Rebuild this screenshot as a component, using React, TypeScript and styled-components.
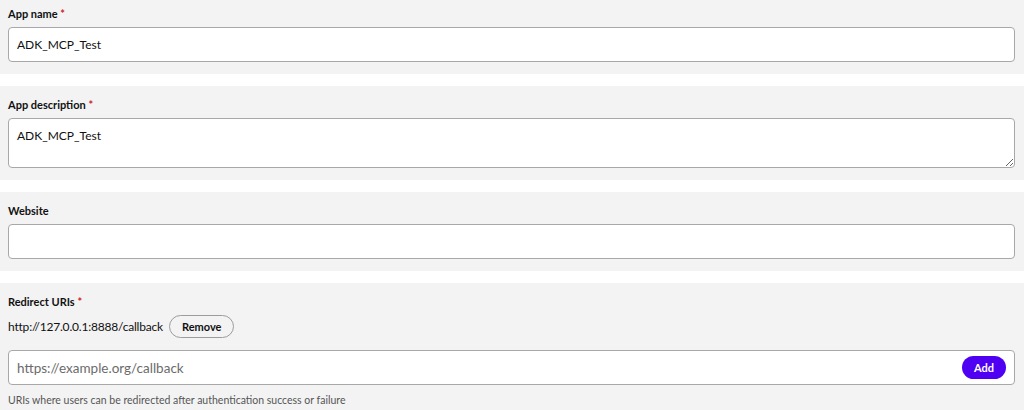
import { createGlobalStyle, styled } from "styled-components";

const GlobalStyle = createGlobalStyle`
  * {
    box-sizing: border-box;
  }
  body {
    margin: 0;
    background: #ffffff;
    font-family: Lato, "Liberation Sans", Arial, sans-serif;
    color: #1a1a1a;
  }
`;

export default function App() {
  return (
    <>
      <GlobalStyle />
      <Page>
        <Section>
          <Label>
            App name <Required>*</Required>
          </Label>
          <TextInput defaultValue="ADK_MCP_Test" />
        </Section>

        <Section>
          <Label>
            App description <Required>*</Required>
          </Label>
          <TextArea defaultValue="ADK_MCP_Test" />
        </Section>

        <Section>
          <Label>Website</Label>
          <TextInput defaultValue="" />
        </Section>

        <Section>
          <Label>
            Redirect URIs <Required>*</Required>
          </Label>
          <UriRow>
            <UriText>http://127.0.0.1:8888/callback</UriText>
            <RemoveButton>Remove</RemoveButton>
          </UriRow>
          <AddBox>
            <AddInput placeholder="https://example.org/callback" />
            <AddButton>Add</AddButton>
          </AddBox>
          <Hint>
            URIs where users can be redirected after authentication success or
            failure
          </Hint>
        </Section>
      </Page>
    </>
  );
}

const Page = styled.div`
  display: flex;
  flex-direction: column;
  gap: 12px;
  margin-top: -5px;
`;

const Section = styled.section`
  background: #f3f3f3;
  padding: 11px 9px 12px 8px;
  display: flex;
  flex-direction: column;
`;

const Label = styled.label`
  font-size: 11px;
  font-weight: 700;
  line-height: 16px;
  margin-bottom: 5px;
  color: #111;
`;

const Required = styled.span`
  color: #d2212f;
`;

const TextInput = styled.input`
  height: 35px;
  width: 100%;
  border: 1px solid #a8a8a8;
  border-radius: 4px;
  background: #fff;
  padding: 0 8px;
  font-family: inherit;
  font-size: 12px;
  color: #111;
  outline: none;
`;

const TextArea = styled.textarea`
  height: 50px;
  width: 100%;
  border: 1px solid #a8a8a8;
  border-radius: 4px;
  background: #fff;
  padding: 9px 8px;
  font-family: inherit;
  font-size: 12px;
  color: #111;
  outline: none;
`;

const UriRow = styled.div`
  display: flex;
  align-items: center;
  gap: 6px;
  margin-bottom: 12px;
`;

const UriText = styled.span`
  font-size: 12px;
  letter-spacing: -0.2px;
  color: #111;
`;

const RemoveButton = styled.button`
  height: 23px;
  padding: 0 12px;
  border: 1px solid #9c9c9c;
  border-radius: 12px;
  background: #f3f3f3;
  font-family: inherit;
  font-size: 11px;
  font-weight: 700;
  color: #111;
`;

const AddBox = styled.div`
  height: 35px;
  display: flex;
  align-items: center;
  border: 1px solid #a8a8a8;
  border-radius: 4px;
  background: #fff;
  padding: 0 8px;
`;

const AddInput = styled.input`
  flex: 1;
  border: none;
  outline: none;
  background: transparent;
  font-family: inherit;
  font-size: 13.5px;
  color: #111;
  padding: 0;

  &::placeholder {
    color: #6b6b6b;
  }
`;

const AddButton = styled.button`
  height: 23px;
  width: 44px;
  border: none;
  border-radius: 12px;
  background: #4f00f2;
  color: #fff;
  font-family: inherit;
  font-size: 11px;
  font-weight: 700;
`;

const Hint = styled.div`
  margin-top: 8px;
  font-size: 10.5px;
  line-height: 14px;
  color: #555;
`;
